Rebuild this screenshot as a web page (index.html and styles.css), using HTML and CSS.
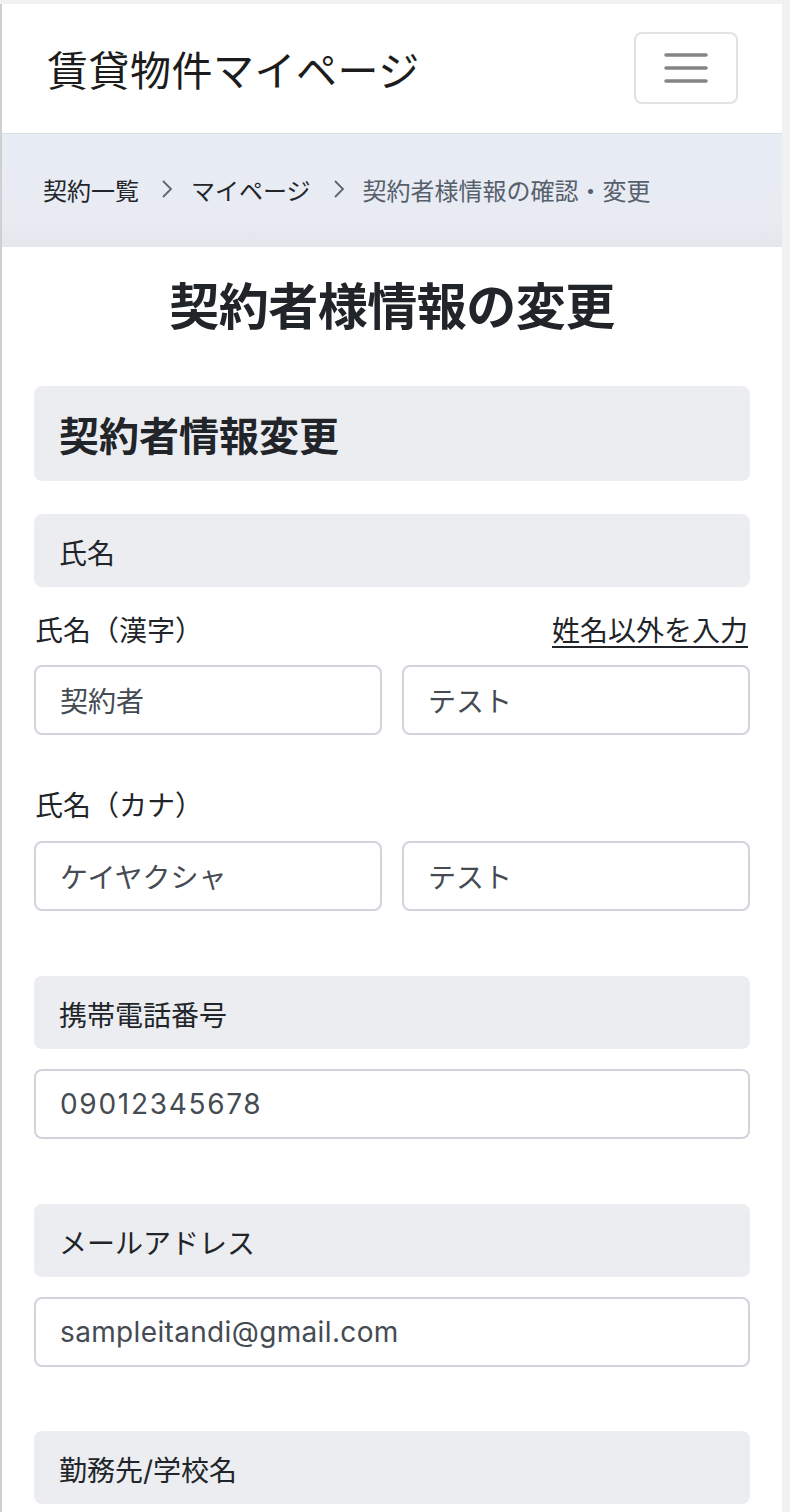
FILE: index.html
```html
<!DOCTYPE html>
<html lang="ja">
<head>
<meta charset="utf-8">
<title>賃貸物件マイページ</title>
<link rel="stylesheet" href="styles.css">
</head>
<body>
<div class="page">
  <header class="navbar">
    <div class="brand">賃貸物件マイページ</div>
    <button class="toggler" type="button" aria-label="メニュー">
      <svg width="44" height="32" viewBox="0 0 44 32">
        <path d="M2 3H42M2 16H42M2 29H42" stroke="#858585" stroke-width="3.5" stroke-linecap="round" fill="none"/>
      </svg>
    </button>
  </header>
  <nav class="crumbs">
    <a class="crumb">契約一覧</a>
    <svg class="chev" width="12" height="20" viewBox="0 0 12 20"><path d="M2 2L10 10L2 18" stroke="#5b6675" stroke-width="1.8" fill="none"/></svg>
    <a class="crumb">マイページ</a>
    <svg class="chev" width="12" height="20" viewBox="0 0 12 20"><path d="M2 2L10 10L2 18" stroke="#5b6675" stroke-width="1.8" fill="none"/></svg>
    <span class="crumb current">契約者様情報の確認・変更</span>
  </nav>
  <main class="content">
    <h1 class="title">契約者様情報の変更</h1>
    <div class="section-head">契約者情報変更</div>

    <div class="field-head">氏名</div>
    <div class="label-row first">
      <span>氏名（漢字）</span>
      <a class="link">姓名以外を入力</a>
    </div>
    <div class="pair">
      <div class="input">契約者</div>
      <div class="input">テスト</div>
    </div>
    <div class="label-row second">
      <span>氏名（カナ）</span>
    </div>
    <div class="pair">
      <div class="input">ケイヤクシャ</div>
      <div class="input">テスト</div>
    </div>

    <div class="field-head gap-big">携帯電話番号</div>
    <div class="input single num">09012345678</div>

    <div class="field-head gap-big">メールアドレス</div>
    <div class="input single mail">sampleitandi@gmail.com</div>

    <div class="field-head gap-last">勤務先/学校名</div>
  </main>
</div>
</body>
</html>
```
FILE: styles.css
```css
html, body {
  margin: 0;
  padding: 0;
}
body {
  background: #f1f1f1;
  font-family: Inter, "Noto Sans CJK JP", sans-serif;
  color: #212529;
  padding-top: 4px;
}
.page {
  width: 780px;
  border-left: 2px solid #cfcfcf;
  background: #ffffff;
  min-height: 1600px;
}
.navbar {
  border-bottom: 1px solid #dcdee2;
  display: flex;
  align-items: center;
  justify-content: space-between;
  padding: 0 44px 0 45px;
  box-sizing: border-box;
  height: 130px;
}
.brand {
  font-size: 41px;
  font-weight: 400;
  color: #1c1c1c;
  letter-spacing: 0.5px;
  margin-top: -2px;
}
.toggler {
  width: 104px;
  height: 72px;
  border: 2px solid #e2e2e2;
  border-radius: 8px;
  background: #fff;
  display: flex;
  align-items: center;
  justify-content: center;
  padding: 0;
  margin-top: -2px;
}
.crumbs {
  height: 113px;
  background: linear-gradient(180deg, #e8ecf4 0%, #e8ebf2 75%, #e3e6ec 100%);
  display: flex;
  align-items: center;
  padding: 0 0 3px 41px;
  font-size: 24px;
  box-sizing: border-box;
}
.crumb {
  color: #22262b;
}
.crumb.current {
  color: #56606c;
}
.chev {
  margin: 0 18px 0 22px;
}
.content {
  padding: 0 32px 40px;
}
.title {
  margin: 22px 0 41px;
  text-align: center;
  font-size: 50px;
  font-weight: 700;
  line-height: 76px;
  color: #212529;
  letter-spacing: -0.5px;
}
.section-head {
  height: 95px;
  background: #ecedf1;
  border-radius: 8px;
  display: flex;
  align-items: center;
  padding: 0 25px;
  font-size: 40px;
  font-weight: 700;
  color: #212529;
}
.field-head {
  height: 73px;
  background: #ecedf1;
  border-radius: 8px;
  display: flex;
  align-items: center;
  padding: 0 25px;
  font-size: 28px;
  color: #212529;
  margin-top: 33px;
  box-sizing: border-box;
  padding-top: 2px;
}
.field-head.gap-big {
  margin-top: 65px;
}
.field-head.gap-last {
  margin-top: 64px;
}
.label-row {
  display: flex;
  justify-content: space-between;
  align-items: center;
  height: 36px;
  font-size: 28px;
  padding-left: 1px;
}
.label-row.first {
  margin-top: 24px;
  margin-bottom: 18px;
}
.label-row.second {
  margin-top: 51px;
  margin-bottom: 19px;
}
.link {
  color: #212529;
  text-decoration: underline;
  text-underline-offset: 5px;
  text-decoration-thickness: 2px;
  margin-right: 2px;
}
.pair {
  display: grid;
  grid-template-columns: 1fr 1fr;
  gap: 20px;
}
.input {
  height: 70px;
  border: 2px solid #d1d5db;
  border-radius: 8px;
  box-sizing: border-box;
  display: flex;
  align-items: center;
  padding: 0 24px;
  font-size: 28px;
  color: #454b53;
  background: #fff;
}
.input.single {
  margin-top: 20px;
}
.input.num {
  letter-spacing: 1.7px;
}
.input.mail {
  letter-spacing: 0.35px;
}
```
